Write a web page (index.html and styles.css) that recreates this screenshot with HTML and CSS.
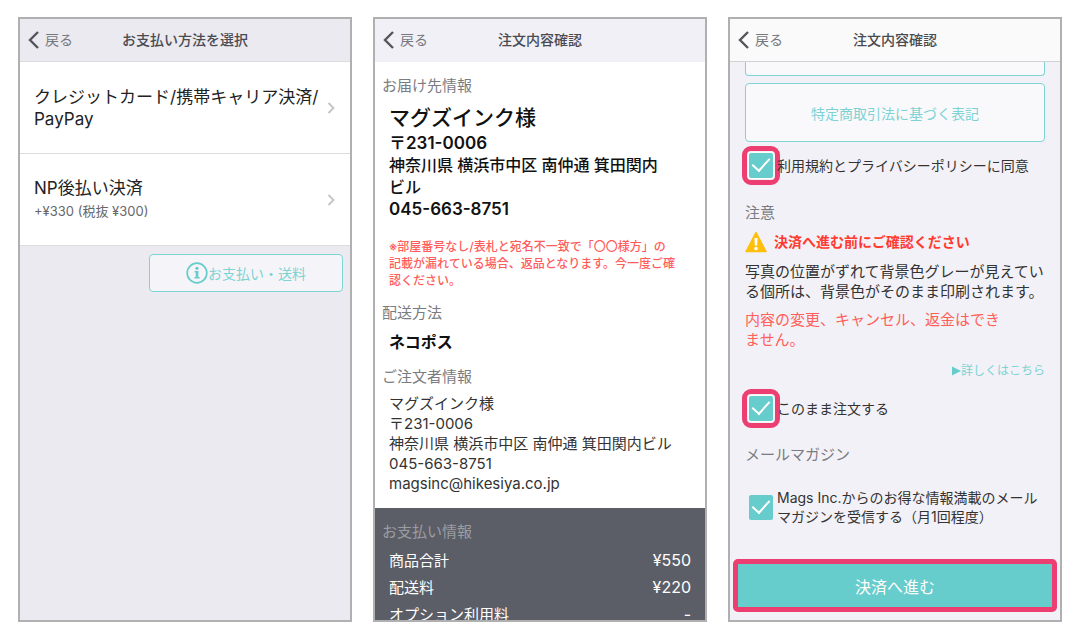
FILE: index.html
```html
<!DOCTYPE html>
<html lang="ja">
<head>
<meta charset="UTF-8">
<meta name="viewport" content="width=device-width, initial-scale=1">
<title>ご注文手続き</title>
<link rel="stylesheet" href="styles.css">
</head>
<body>
	<main class="screens">

		<!-- お支払い方法 -->
		<section class="screen payment">
			<header class="navbar">
				<button type="button" class="back">
					<svg width="12" height="20" viewBox="0 0 12 20"><path d="M10 2 L2 10 L10 18" /></svg>戻る
				</button>
				<h1>お支払い方法を選択</h1>
			</header>
			<a href="#" class="method">
				<span class="method-name">クレジットカード/携帯キャリア決済/<br>PayPay</span>
				<svg class="chevron" width="8" height="12" viewBox="0 0 8 12"><path d="M1.5 1 L6.5 6 L1.5 11" /></svg>
			</a>
			<a href="#" class="method">
				<span class="method-name">NP後払い決済<br><small>+¥330 (税抜 ¥300)</small></span>
				<svg class="chevron" width="8" height="12" viewBox="0 0 8 12"><path d="M1.5 1 L6.5 6 L1.5 11" /></svg>
			</a>
			<button type="button" class="outline-btn info-btn">
				<svg width="22" height="22" viewBox="0 0 22 22">
					<circle cx="11" cy="11" r="9.8" fill="none" stroke="#66cccc" stroke-width="1.7" />
					<circle cx="11" cy="6.3" r="1.6" />
					<path d="M8.6 9 H12.4 V15 H13.6 V16.6 H8.4 V15 H9.7 V10.6 H8.6 Z" />
				</svg>お支払い・送料
			</button>
		</section>

		<!-- 注文内容 -->
		<section class="screen order">
			<header class="navbar">
				<button type="button" class="back">
					<svg width="12" height="20" viewBox="0 0 12 20"><path d="M10 2 L2 10 L10 18" /></svg>戻る
				</button>
				<h1>注文内容確認</h1>
			</header>
			<div class="order-body">
				<h2>お届け先情報</h2>
				<div class="address">
					<p class="name">マグズインク様</p>
					<p class="digits">〒231-0006</p>
					<p>神奈川県 横浜市中区 南仲通 箕田関内<br>ビル</p>
					<p class="digits">045-663-8751</p>
				</div>
				<p class="warning">※部屋番号なし/表札と宛名不一致で「〇〇様方」の<br>記載が漏れている場合、返品となります。今一度ご確<br>認ください。</p>
				<h2>配送方法</h2>
				<p class="delivery">ネコポス</p>
				<h2>ご注文者情報</h2>
				<p class="customer">マグズインク様<br>〒231-0006<br>神奈川県 横浜市中区 南仲通 箕田関内ビル<br>045-663-8751<br>magsinc@hikesiya.co.jp</p>
			</div>
			<div class="bill">
				<h2>お支払い情報</h2>
				<dl>
					<div><dt>商品合計</dt><dd>¥550</dd></div>
					<div><dt>配送料</dt><dd>¥220</dd></div>
					<div><dt>オプション利用料</dt><dd>-</dd></div>
				</dl>
			</div>
		</section>

		<!-- 同意と決済 -->
		<section class="screen confirm">
			<header class="navbar">
				<button type="button" class="back">
					<svg width="12" height="20" viewBox="0 0 12 20"><path d="M10 2 L2 10 L10 18" /></svg>戻る
				</button>
				<h1>注文内容確認</h1>
			</header>
			<div class="confirm-body">
				<div class="scrolled-box"></div>
				<button type="button" class="outline-btn law-btn">特定商取引法に基づく表記</button>
				<div class="check terms">
					<input type="checkbox" id="terms" class="marked" checked>
					<label for="terms">利用規約とプライバシーポリシーに同意</label>
				</div>
				<h2>注意</h2>
				<h3>
					<svg width="22" height="22" viewBox="0 0 22 22">
						<path d="M11 1.5 L21 20.5 H1 Z" fill="#ffbf0b" stroke="#ffbf0b" stroke-width="1.5" stroke-linejoin="round" />
						<path d="M9.4 7 H12.6 L12.2 14.5 H9.8 Z" fill="#fff" />
						<circle cx="11" cy="17.5" r="1.8" fill="#fff" />
					</svg>決済へ進む前にご確認ください
				</h3>
				<p class="note">写真の位置がずれて背景色グレーが見えてい<br>る個所は、背景色がそのまま印刷されます。</p>
				<p class="note red">内容の変更、キャンセル、返金はでき<br>ません。</p>
				<a href="#" class="more"><svg width="10" height="10" viewBox="0 0 10 10"><path d="M1 0.5 L10 5 L1 9.5 Z" /></svg>詳しくはこちら</a>
				<div class="check agree">
					<input type="checkbox" id="agree" class="marked" checked>
					<label for="agree">このまま注文する</label>
				</div>
				<h2>メールマガジン</h2>
				<div class="check magazine">
					<input type="checkbox" id="magazine" checked>
					<label for="magazine">Mags Inc.からのお得な情報満載のメール<br>マガジンを受信する（月1回程度）</label>
				</div>
			</div>
			<button type="button" class="submit">決済へ進む</button>
		</section>

	</main>
</body>
</html>
```
FILE: styles.css
```css
* {
	box-sizing: border-box;
}

body {
	margin: 0;
	background-color: #fff;
	color: #333;
	font-family: Inter, "Noto Sans CJK JP", sans-serif;
}

h1, h2, h3, p, dl, dd {
	margin: 0;
}

button {
	font-family: inherit;
	cursor: pointer;
}

a {
	text-decoration: none;
}

.screens {
	display: grid;
	grid-template-columns: repeat(3, 1fr);
	gap: 21px;
	height: 100vh;
	padding: 17px 18px 18px;
}

.screen {
	display: flex;
	flex-direction: column;
	min-height: 0;
	border: 2px solid #b0b0b1;
	overflow: hidden;
}

/* navigation bar */
.navbar {
	display: grid;
	grid-template-columns: 1fr auto 1fr;
	align-items: center;
	flex: none;
	height: 43px;
	padding: 0 8px;
	border-bottom: 1px solid transparent;
}

.navbar h1 {
	font-size: 14px;
	line-height: 20px;
	font-weight: 500;
	color: #4a4b51;
}

.back {
	display: flex;
	align-items: center;
	gap: 5px;
	padding: 0;
	border: none;
	background: none;
	font-size: 14px;
	line-height: 20px;
	color: #77787e;
}

.back path {
	fill: none;
	stroke: #55565c;
	stroke-width: 2.4;
}

/* payment method list */
.payment {
	background-color: #ebeaf1;
}

.payment .navbar {
	border-bottom-color: #dcdce0;
}

.method {
	display: flex;
	align-items: center;
	justify-content: space-between;
	flex: none;
	height: 92px;
	padding: 0 15px 0 14px;
	background-color: #fff;
	border-bottom: 1px solid #dcdce0;
	color: #222;
}

.method-name {
	font-size: 17px;
	line-height: 22px;
	white-space: nowrap;
}

.method small {
	font-size: 13px;
	color: #66676b;
}

.chevron path {
	fill: none;
	stroke: #c4c4c8;
	stroke-width: 1.8;
}

.outline-btn {
	border: 1px solid #7dd5d5;
	border-radius: 4px;
	font-size: 14px;
	color: #7dd3d3;
}

.info-btn {
	display: flex;
	align-items: center;
	justify-content: center;
	align-self: flex-end;
	width: 194px;
	height: 38px;
	margin: 8px 7px;
	padding: 0;
	background-color: #f5f5f9;
}

.info-btn svg {
	fill: #66cccc;
}

/* order details */
.order {
	background-color: #fff;
}

.order .navbar {
	background-color: #f1f0f6;
}

.screen h2 {
	font-size: 15px;
	line-height: 20px;
	font-weight: normal;
	color: #7b7c82;
}

.order-body {
	flex: none;
	padding: 14px 7px;
}

.address, .warning, .delivery, .customer {
	padding-left: 7px;
	white-space: nowrap;
}

.address {
	margin-top: 8px;
	font-size: 16px;
	line-height: 22px;
	font-weight: 500;
	color: #111;
}

.name {
	font-size: 21px;
	line-height: 28px;
}

.digits {
	font-size: 17px;
	font-weight: 600;
}

.warning {
	margin: 18px 0 14px;
	font-size: 12px;
	line-height: 17px;
	font-weight: 500;
	color: #ff5c5c;
}

.delivery {
	margin: 8px 0 14px;
	font-size: 16px;
	line-height: 22px;
	font-weight: bold;
	color: #111;
}

.customer {
	margin-top: 7px;
	font-size: 15px;
	line-height: 20px;
}

.bill {
	flex: 1 0 auto;
	padding: 14px 14px 0 7px;
	background-color: #5b5e66;
}

.bill h2 {
	color: #9b9da2;
}

.bill dl {
	margin-top: 5px;
	padding-left: 7px;
	font-size: 15px;
	line-height: 27px;
	color: #fff;
}

.bill dl div {
	display: flex;
	justify-content: space-between;
}

.bill dd {
	font-size: 16px;
}

/* agreement and checkout */
.confirm {
	background-color: #f2f1f7;
}

.confirm .navbar {
	background-color: #f9faf9;
	border-bottom-color: #d2d2d5;
}

.confirm-body {
	flex: none;
	padding: 0 15px;
}

.scrolled-box {
	height: 14px;
	border: 1px solid #7dd5d5;
	border-top: none;
	border-radius: 0 0 4px 4px;
	background-color: #f9f9fc;
}

.law-btn {
	width: 100%;
	height: 59px;
	margin-top: 7px;
	background-color: #f9f9fc;
}

.check {
	display: flex;
	align-items: center;
	gap: 4px;
	padding-left: 4px;
	white-space: nowrap;
}

.check label {
	font-size: 14px;
	line-height: 19px;
}

.check input {
	appearance: none;
	display: grid;
	flex: none;
	place-items: center;
	width: 24px;
	height: 25px;
	margin: 0;
	border-radius: 2px;
	background-color: #66cccc;
}

.check input::before {
	content: "";
	width: 8px;
	height: 15px;
	margin-bottom: 6px;
	border: solid #fff;
	border-width: 0 2px 2px 0;
	transform: rotate(42deg);
	visibility: hidden;
}

.check input:checked::before {
	visibility: visible;
}

.check .marked {
	outline: 5px solid #ec3e70;
	outline-offset: 2px;
	box-shadow: 0 0 0 1px #fff;
}

.terms {
	margin: 11px 0 25px;
}

.confirm h3 {
	display: flex;
	align-items: center;
	gap: 7px;
	margin: 8px 0 9px;
	font-size: 14px;
	line-height: 20px;
	font-weight: bold;
	color: #ff3b30;
}

.note {
	margin-bottom: 8px;
	font-size: 15px;
	line-height: 20px;
	white-space: nowrap;
}

.red {
	color: #ff6058;
}

.more {
	display: flex;
	align-items: center;
	justify-content: flex-end;
	margin-top: 11px;
	font-size: 12px;
	line-height: 20px;
	color: #7dd3d3;
}

.more svg {
	fill: #66cccc;
}

.agree {
	margin: 15px 0 24px;
}

.magazine {
	margin-top: 23px;
}

.submit {
	flex: none;
	height: 53px;
	margin: 33px 3px 0;
	padding: 0;
	border: 5px solid #ec3e70;
	border-radius: 5px;
	background-color: #66cccc;
	font-size: 16px;
	color: #fff;
}
```
